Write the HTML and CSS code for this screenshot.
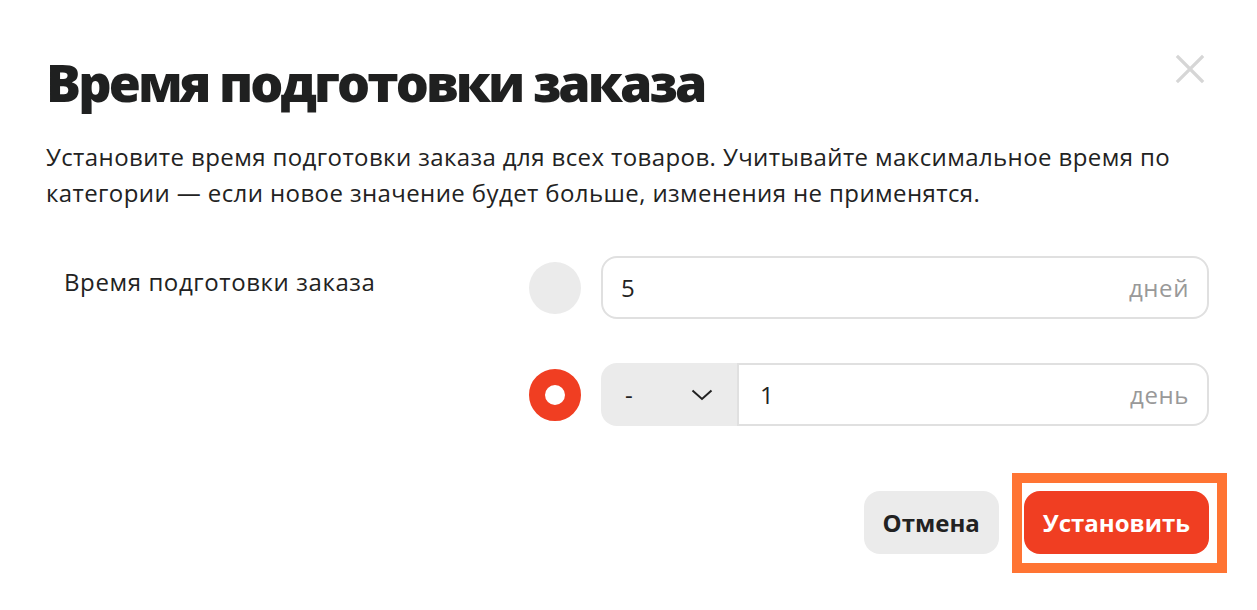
FILE: index.html
```html
<!DOCTYPE html>
<html lang="ru">
<head>
  <meta charset="UTF-8">
  <title>Время подготовки заказа</title>
  <link rel="stylesheet" href="styles.css">
</head>
<body>

<div class="modal">
  <button class="close-btn" aria-label="Закрыть">
    <svg width="30" height="30" viewBox="0 0 30 30">
      <path d="M3 3 L27 27 M27 3 L3 27" stroke="#d6d6d6" stroke-width="3.2" stroke-linecap="square" fill="none"/>
    </svg>
  </button>

  <h1 class="modal-title">Время подготовки заказа</h1>
  <p class="modal-text">Установите время подготовки заказа для всех товаров. Учитывайте максимальное время по категории — если новое значение будет больше, изменения не применятся.</p>

  <div class="form-grid">
    <div class="field-label">Время подготовки заказа</div>

    <span class="radio"></span>
    <div class="input-box">
      <span class="input-value">5</span>
      <span class="input-unit">дней</span>
    </div>

    <span class="radio radio-checked"></span>
    <div class="input-group">
      <div class="select-box">
        <span>-</span>
        <svg width="22" height="12" viewBox="0 0 22 12">
          <path d="M1.5 1.5 L11 10 L20.5 1.5" stroke="#222" stroke-width="2" fill="none"/>
        </svg>
      </div>
      <div class="input-box input-joined">
        <span class="input-value">1</span>
        <span class="input-unit">день</span>
      </div>
    </div>
  </div>

  <div class="modal-actions">
    <button class="btn btn-cancel">Отмена</button>
    <div class="btn-wrap">
      <button class="btn btn-primary">Установить</button>
      <span class="highlight"></span>
    </div>
  </div>
</div>

</body>
</html>
```

FILE: styles.css
```css
body {
  margin: 0;
  background-color: #fff;
  font-family: 'Open Sans', 'Noto Sans', sans-serif;
  color: #222;
}

.modal {
  position: relative;
  min-height: 610px;
  box-sizing: border-box;
  padding: 44px 48px 56px 46px;
}

.close-btn {
  position: absolute;
  top: 54px;
  right: 52px;
  padding: 0;
  border: none;
  background: none;
  cursor: pointer;
}

.close-btn svg {
  display: block;
}

.modal-title {
  margin: 0;
  font-size: 52px;
  font-weight: 800;
  letter-spacing: -2.9px;
  line-height: 76px;
  color: #1f2020;
}

.modal-text {
  margin: 19px 0 0;
  font-size: 24px;
  line-height: 36px;
  letter-spacing: 0.4px;
  color: #222;
}

.form-grid {
  display: grid;
  grid-template-columns: 463px 52px 1fr;
  column-gap: 20px;
  row-gap: 44px;
  margin-top: 45px;
  align-items: center;
}

.field-label {
  grid-row: 1 / span 2;
  align-self: start;
  padding: 10px 0 0 18px;
  font-size: 24px;
  line-height: 32px;
  letter-spacing: 0.6px;
}

.radio {
  grid-column: 2;
  width: 52px;
  height: 52px;
  border-radius: 50%;
  background-color: #ebebeb;
  box-sizing: border-box;
}

.radio-checked {
  background-color: #fff;
  border: 16px solid #f03e22;
}

.input-box {
  display: flex;
  align-items: center;
  justify-content: space-between;
  height: 63px;
  box-sizing: border-box;
  padding: 0 18px 0 18px;
  border: 2px solid #e0e0e0;
  border-radius: 16px;
  font-size: 24px;
  letter-spacing: 0.6px;
}

.input-unit {
  color: #999;
}

.input-group {
  display: flex;
}

.select-box {
  display: flex;
  align-items: center;
  justify-content: space-between;
  width: 136px;
  height: 63px;
  box-sizing: border-box;
  padding: 0 24px 0 24px;
  background-color: #ebebeb;
  border-radius: 16px 0 0 16px;
  font-size: 24px;
}

.input-joined {
  flex: 1;
  border-radius: 0 16px 16px 0;
  padding-left: 21px;
}

.modal-actions {
  display: flex;
  justify-content: flex-end;
  gap: 25px;
  margin-top: 65px;
}

.btn-wrap {
  position: relative;
}

.btn {
  display: block;
  height: 63px;
  padding: 0 19px;
  border: none;
  border-radius: 16px;
  font-family: inherit;
  font-size: 24px;
  font-weight: 700;
  cursor: pointer;
}

.btn-cancel {
  background-color: #ebebeb;
  color: #222;
}

.btn-primary {
  background-color: #f03e22;
  color: #fff;
}

.highlight {
  position: absolute;
  top: -18px;
  left: -12px;
  right: -18px;
  bottom: -19px;
  border: 10px solid #ff7433;
  pointer-events: none;
}
```
